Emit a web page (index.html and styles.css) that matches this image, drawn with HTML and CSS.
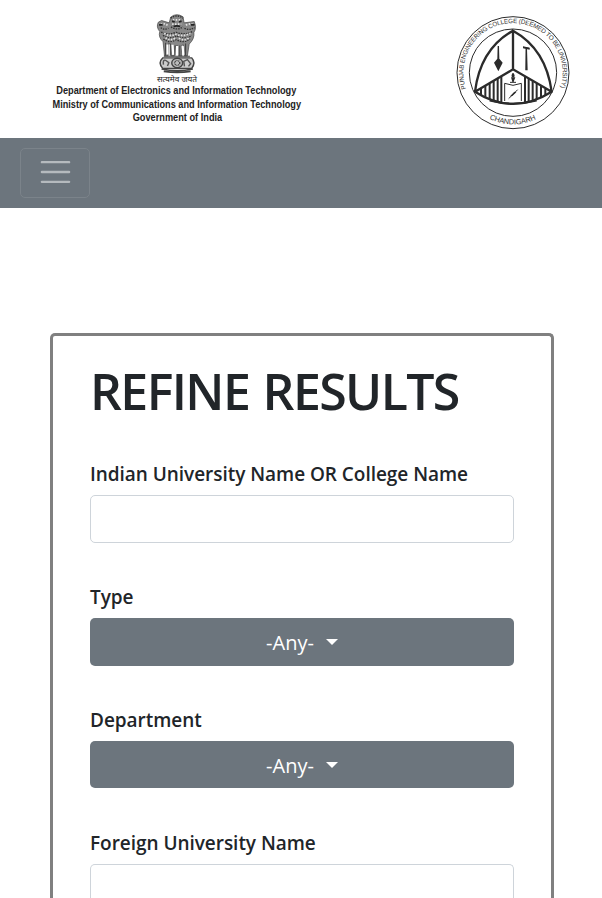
FILE: index.html
```html
<!DOCTYPE html>
<html lang="en">
<head>
<meta charset="utf-8">
<title>Refine Results</title>
<link rel="stylesheet" href="styles.css">
</head>
<body>
<header class="banner">
  <svg class="ministry" viewBox="0 0 280 138" role="img" aria-label="Government of India">
    <g transform="translate(102 5) scale(.363 .337)" fill="none" stroke="#444" stroke-width="4">
      <path fill="#888" d="M79 36Q95 22 113 35L116 53L144 49Q151 69 143 81Q145 101 130 116L125 151H117L114 118L108 121L110 151H101L98 120L92 121L89 151H80L79 117L73 114L72 151H62L58 109Q44 95 49 79Q38 65 45 51L54 46L75 53Z" stroke-width="2"/>
      <path stroke="#333" stroke-width="4" stroke-dasharray="4 3" d="M79 39Q96 26 113 39M80 65Q96 77 113 65M53 80Q70 91 94 81Q120 91 140 78M58 90Q76 104 95 91Q115 104 137 91M59 101Q77 115 94 103Q115 115 132 101M52 67Q58 75 73 69M117 69Q130 77 145 67"/>
      <path stroke="#e4e4e4" stroke-width="5" stroke-dasharray="4 4" d="M52 59Q61 52 71 61M121 60Q133 52 144 61M85 44H107M83 57H108M61 84Q77 95 94 87Q113 95 133 84M65 97Q77 108 92 98M102 98Q115 108 128 98"/>
      <path stroke="#222" stroke-width="5" d="M83 48L90 50M102 50L109 48M87 64Q96 60 105 64M47 59H57M135 59H145"/>
      <path stroke="#fff" stroke-width="6" d="M70 117V147M84 118L86 148M97 122V149M112 122L114 148"/>
      <path stroke="#444" stroke-width="3" d="M65 112V150M78 114V150M91 120V150M104 120V150M120 114V150M60 152H132"/>
      <path fill="#ccc" d="M57 157H137Q149 171 137 188H57Q43 171 57 157Z"/>
      <ellipse cx="97" cy="172" rx="15" ry="14" fill="#bbb" stroke="#444"/>
      <circle cx="97" cy="172" r="7" stroke-dasharray="3 2"/>
      <path stroke="#555" d="M59 177Q57 161 65 164L74 171L70 181M117 182L115 167L125 162L134 174L128 182"/>
      <path stroke="#444" stroke-width="5" d="M54 190Q97 199 140 190M60 197Q97 203 134 197"/>
    </g>
    <g class="motto"><text x="117" y="81.5" textLength="40" lengthAdjust="spacingAndGlyphs">सत्यमेव जयते</text></g>
    <g class="ministry-text">
      <text x="16.3" y="94" textLength="240" lengthAdjust="spacingAndGlyphs">Department of Electronics and Information Technology</text>
      <text x="12.5" y="107.8" textLength="248.5" lengthAdjust="spacingAndGlyphs">Ministry of Communications and Information Technology</text>
      <text x="92.7" y="121.3" textLength="89.5" lengthAdjust="spacingAndGlyphs">Government of India</text>
    </g>
  </svg>
  <svg class="college" viewBox="0 0 378 378" role="img" aria-label="Punjab Engineering College">
    <defs>
      <path id="ringTop" d="M50 241.7A149 149 0 1 1 328 241.7"/>
      <path id="ringBottom" d="M94 311A156 156 0 0 0 284 311"/>
    </defs>
    <g fill="none" stroke="#2b2b2b">
      <circle cx="189" cy="188" r="168" stroke-width="3"/>
      <circle cx="189" cy="188" r="131" stroke-width="3"/>
      <path stroke-width="7" d="M189 62Q91 117 75 245Q189 318 305 245Q288 117 189 62V178M75 245L189 178L305 245"/>
      <path stroke-width="3" d="M164 220V273M214 220V273M220 112L238 115M229 112V180"/>
      <path stroke-width="6" d="M93 236V256M106 228V262M119 221V267M131 214V271M143 207V274M154 201V277M225 201V277M236 207V274M248 214V271M260 221V267M273 228V262M286 236V256"/>
      <path stroke-width="3" d="M164 220L189 226L214 220M176 266L203 239M189 190V216M180 217H198"/>
      <path stroke-width="5" d="M119 272Q189 290 260 272"/>
    </g>
    <path fill="#2b2b2b" d="M143 108H147L148 146L158 158L145 184L132 158L142 146ZM219 109L239 113V119L219 115ZM227 116H231L233 181H226ZM183 202H196L191 215H187ZM189 188Q180 198 189 204Q199 198 189 188ZM180 259L193 245L199 247L187 258Z"/>
    <text class="ring-text"><textPath href="#ringTop" startOffset="6" textLength="562">PUNJAB ENGINEERING COLLEGE (DEEMED TO BE UNIVERSITY)</textPath></text>
    <text class="ring-text ring-name"><textPath href="#ringBottom" startOffset="28" textLength="146">CHANDIGARH</textPath></text>
  </svg>
</header>
<nav class="navbar">
  <button class="toggler" aria-label="Toggle navigation">
    <svg viewBox="0 0 30 30"><path d="M4 7h22M4 15h22M4 23h22"/></svg>
  </button>
</nav>
<main class="filters">
  <h1>REFINE RESULTS</h1>
  <form>
    <div class="field"><label for="indian">Indian University Name OR College Name</label><input id="indian" type="text"></div>
    <div class="field"><label for="type">Type</label><button class="dropdown" id="type" type="button"><span>-Any-</span></button></div>
    <div class="field"><label for="department">Department</label><button class="dropdown short" id="department" type="button"><span>-Any-</span></button></div>
    <div class="field last"><label for="foreign">Foreign University Name</label><input id="foreign" class="cut" type="text"></div>
  </form>
</main>
</body>
</html>
```
FILE: styles.css
```css
* { box-sizing: border-box; }
body {
  margin: 0;
  background: #fff;
  color: #212529;
  font: 400 20px/30px "Open Sans", "Noto Sans", sans-serif;
}
.banner {
  display: flex;
  justify-content: space-between;
  height: 138px;
  padding: 0 26px 0 40px;
}
.ministry { width: 280px; height: 138px; }
.ministry-text { font: bold 11px "Liberation Sans", sans-serif; fill: #222; }
.motto { font: 8.5px "Noto Sans Devanagari", "Noto Sans", sans-serif; fill: #222; }
.college { width: 126px; height: 126px; margin-top: 10px; }
.ring-text { font: 19px "Liberation Sans", sans-serif; fill: #333; }
.ring-name { font-size: 22px; }
.navbar {
  display: flex;
  align-items: center;
  height: 70px;
  padding: 0 20px;
  background: #6c757d;
}
.toggler {
  display: flex;
  justify-content: center;
  align-items: center;
  width: 70px;
  height: 50px;
  padding: 0 0 2px 1px;
  border: 1px solid #7b838a;
  border-radius: 5px;
  background: none;
}
.toggler svg { width: 37px; height: 38px; }
.toggler path { fill: none; stroke: #b5babe; stroke-width: 2; stroke-linecap: round; }
.filters {
  width: 504px;
  height: 565px;
  margin: 125px 0 0 50px;
  padding: 25px 37px 0;
  border: 3px solid #808080;
  border-bottom: 0;
  border-radius: 5px 5px 0 0;
}
h1 {
  margin: 0 0 38px;
  font-size: 50px;
  line-height: 60px;
  font-weight: 600;
  letter-spacing: -1.6px;
  word-spacing: 2px;
  white-space: nowrap;
}
.field { display: flex; flex-direction: column; height: 123px; }
.field.last { height: 70px; }
label { height: 36px; font-size: 19px; font-weight: 600; letter-spacing: -0.04px; white-space: nowrap; }
input {
  width: 100%;
  height: 48px;
  border: 1px solid #ced4da;
  border-radius: 5px;
  background: #fff;
}
.cut { height: 34px; border-bottom: 0; border-radius: 5px 5px 0 0; }
.dropdown {
  display: flex;
  justify-content: center;
  align-items: center;
  height: 48px;
  padding: 2px 0 0;
  border: 0;
  border-radius: 5px;
  background: #6c757d;
  color: #fff;
  font: 400 20px/30px "Open Sans", "Noto Sans", sans-serif;
}
.dropdown.short { height: 47px; padding-top: 3px; }
.dropdown::after {
  content: "";
  margin: -2px 0 0 12px;
  border-top: 6px solid #fff;
  border-left: 6px solid transparent;
  border-right: 6px solid transparent;
}
```
